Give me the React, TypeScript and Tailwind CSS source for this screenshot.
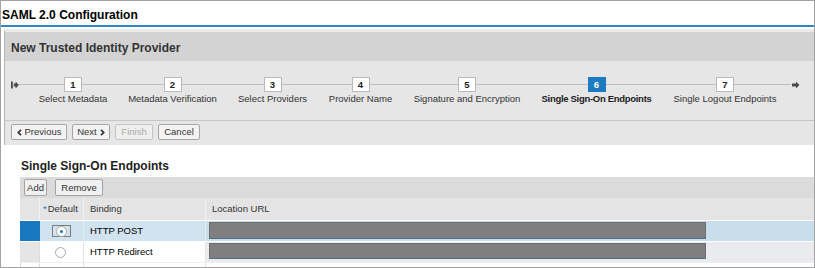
import React from 'react';

const steps = [
  { n: 1, label: 'Select Metadata', w: 'w-[90px]' },
  { n: 2, label: 'Metadata Verification', w: 'w-[109px]' },
  { n: 3, label: 'Select Providers', w: 'w-[91px]' },
  { n: 4, label: 'Provider Name', w: 'w-[85px]' },
  { n: 5, label: 'Signature and Encryption', w: 'w-[128px]' },
  { n: 6, label: 'Single Sign-On Endpoints', w: 'w-[131px]', active: true },
  { n: 7, label: 'Single Logout Endpoints', w: 'w-[126px]' },
];

function Radio({ checked }: { checked?: boolean }) {
  return (
    <span className="flex h-[11px] w-[11px] items-center justify-center rounded-full border border-[#a9a9a9] bg-white">
      {checked && <span className="h-[3px] w-[3px] rounded-full bg-[#1a6fb0]" />}
    </span>
  );
}

function WizButton({ children, disabled, w }: { children: React.ReactNode; disabled?: boolean; w: string }) {
  return (
    <button
      className={`flex h-[16px] ${w} items-center justify-center gap-[3px] rounded-[2px] border text-[9.5px] leading-none ${
        disabled ? 'border-[#c4c4c4] bg-[#efefef] text-[#ababab]' : 'border-[#a6a6a6] bg-[#f3f3f3] text-[#333]'
      }`}
    >
      {children}
    </button>
  );
}

function Chevron({ dir }: { dir: 'left' | 'right' }) {
  return (
    <svg width="5" height="7" viewBox="0 0 5 7">
      <path
        d={dir === 'left' ? 'M4 0.8 L1.3 3.5 L4 6.2' : 'M1 0.8 L3.7 3.5 L1 6.2'}
        fill="none"
        stroke="#333"
        strokeWidth="1.7"
      />
    </svg>
  );
}

export default function App() {
  return (
    <div className="h-[268px] w-[815px] overflow-hidden border border-[#a3a3a3] bg-white font-['Liberation_Sans',Arial,sans-serif] text-[#333]">
      {/* Title bar */}
      <div className="h-[26px] border-b-2 border-[#2b88c8] pl-[1px] pt-[7px] text-[12px] font-bold leading-[14px] text-black">
        SAML 2.0 Configuration
      </div>

      {/* Wizard panel */}
      <div className="ml-[3px] mt-[2px] border-l border-t-[3px] border-l-[#b3b3b3] border-t-[#ebebeb]">
        <div className="h-[29px] bg-[#d3d3d3] pl-[6px] pt-[8px] text-[12px] font-bold leading-[16px] text-[#333]">
          New Trusted Identity Provider
        </div>
        <div className="bg-[#e6e6e6]">
          <div className="flex h-[60px] items-start border-b border-[#c6c6c6] pl-[6px] pt-[16px]">
            <div className="flex h-[15px] items-center">
              <svg width="8" height="8" viewBox="0 0 8 8">
                <rect x="0" y="0.5" width="1.8" height="7" fill="#4a4a4a" />
                <polygon points="2.8,2.6 4.6,2.6 4.6,0.6 7.8,4 4.6,7.4 4.6,5.4 2.8,5.4" fill="#4a4a4a" />
              </svg>
              <div className="h-px w-[9px] bg-[#bdbdbd]" />
            </div>
            {steps.map((s) => (
              <div key={s.n} className={`flex ${s.w} flex-col items-center`}>
                <div className="flex h-[15px] w-full items-center">
                  <div className="h-px flex-1 bg-[#bdbdbd]" />
                  <div
                    className={`flex h-[15px] w-[18px] items-center justify-center border text-[9.5px] font-bold leading-none ${
                      s.active ? 'border-[#1b7ac0] bg-[#1b7ac0] text-white' : 'border-[#b9b9b9] bg-white text-[#222]'
                    }`}
                  >
                    {s.n}
                  </div>
                  <div className="h-px flex-1 bg-[#bdbdbd]" />
                </div>
                <div
                  className={`mt-[1px] whitespace-nowrap text-[9.5px] leading-[12px] ${
                    s.active ? 'font-bold tracking-[-0.3px] text-[#222]' : 'text-[#333]'
                  }`}
                >
                  {s.label}
                </div>
              </div>
            ))}
            <div className="flex h-[15px] items-center">
              <div className="h-px w-[3px] bg-[#bdbdbd]" />
              <svg width="8" height="8" viewBox="0 0 8 8" className="ml-[1px]">
                <polygon points="0,2.6 4,2.6 4,0.6 7.4,4 4,7.4 4,5.4 0,5.4" fill="#4a4a4a" />
              </svg>
            </div>
          </div>
          <div className="flex h-[24px] items-start gap-[5px] pl-[6px] pt-[3px]">
            <WizButton w="w-[56px]">
              <Chevron dir="left" />
              Previous
            </WizButton>
            <WizButton w="w-[38px]">
              Next
              <Chevron dir="right" />
            </WizButton>
            <WizButton w="w-[38px]" disabled>
              Finish
            </WizButton>
            <WizButton w="w-[42px]">Cancel</WizButton>
          </div>
        </div>
      </div>

      {/* Endpoints section */}
      <div className="pl-[19px]">
        <div className="mt-[14px] pl-[1px] text-[12px] font-bold leading-[14px] text-[#222]">
          Single Sign-On Endpoints
        </div>
        <div className="mt-[4px]">
          <div className="flex h-[21px] items-center gap-[8px] bg-[#dbdbdb] pl-[4px]">
            <button className="h-[17px] w-[23px] rounded-[2px] border border-[#a3a3a3] bg-[#f0f0f0] text-[9.5px] leading-none text-[#333]">
              Add
            </button>
            <button className="h-[17px] w-[48px] rounded-[2px] border border-[#a3a3a3] bg-[#f0f0f0] text-[9.5px] leading-none text-[#333]">
              Remove
            </button>
          </div>

          {/* Header */}
          <div className="grid h-[23px] grid-cols-[20px_44px_122px_1fr] border-b border-white bg-[#e4e4e4] text-[9.5px] text-[#333]">
            <div className="border-r border-[#f3f3f3]" />
            <div className="flex items-center border-r border-[#f3f3f3] pl-[3px]">
              <span className="mr-[1px] text-[#1b7ac0]">*</span>Default
            </div>
            <div className="flex items-center border-r border-[#f3f3f3] pl-[6px]">Binding</div>
            <div className="flex items-center pl-[6px]">Location URL</div>
          </div>

          {/* Row 1 (selected) */}
          <div className="grid h-[21px] grid-cols-[20px_44px_122px_1fr] border-b border-white text-[9.5px] text-black">
            <div className="bg-[#1877be]" />
            <div className="flex items-center border-r border-[#e2edf4] bg-[#d0e3ef] pl-[12px]">
              <span className="flex h-[12px] w-[19px] items-center justify-center border border-[#7d7d7d]">
                <Radio checked />
              </span>
            </div>
            <div className="flex items-center border-r border-[#e2edf4] bg-[#d0e3ef] pl-[6px]">HTTP POST</div>
            <div className="flex items-start bg-[#c9deeb] pl-[3px] pt-[1px]">
              <div className="h-[17px] w-[497px] border border-[#6e6e6e] border-b-[#4f6e8f] bg-[#7f7f7f]" />
            </div>
          </div>

          {/* Row 2 */}
          <div className="grid h-[21px] grid-cols-[20px_44px_122px_1fr] border-b border-[#eeeeee] text-[9.5px] text-black">
            <div className="border-r border-[#dcdcdc] bg-[#e5e5e5]" />
            <div className="flex items-center border-r border-[#e3e3e3] bg-white pl-[15px]">
              <Radio />
            </div>
            <div className="flex items-center border-r border-[#e3e3e3] bg-white pl-[6px]">HTTP Redirect</div>
            <div className="flex items-start bg-[#eaebef] pl-[3px] pt-[1px]">
              <div className="h-[16px] w-[497px] border border-[#6e6e6e] border-b-[#4f6e8f] bg-[#7f7f7f]" />
            </div>
          </div>

          {/* Row 3 (partially visible) */}
          <div className="grid h-[21px] grid-cols-[20px_44px_122px_1fr]">
            <div className="border-l border-r border-[#dcdcdc]" />
            <div className="border-r border-[#e3e3e3]" />
            <div className="border-r border-[#e3e3e3]" />
            <div />
          </div>
        </div>
      </div>
    </div>
  );
}
